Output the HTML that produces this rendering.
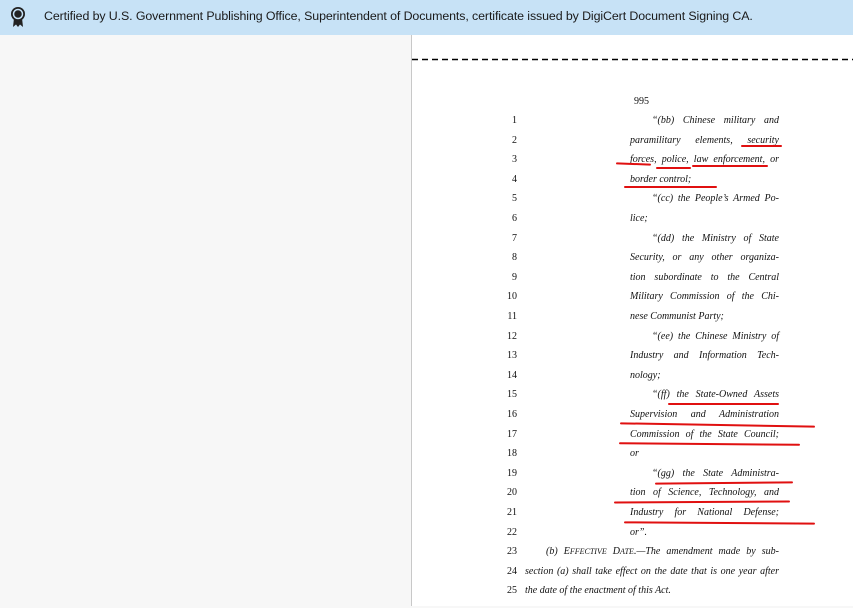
<!DOCTYPE html>
<html><head><meta charset="utf-8"><style>
body{margin:0;width:853px;height:606px;overflow:hidden;position:relative;background:#f7f7f7;font-family:"Liberation Sans",sans-serif}
#ban{position:absolute;left:0;top:0;width:853px;height:35px;background:#c7e2f6}
#ban span{position:absolute;left:44px;top:9px;font-size:12.4px;letter-spacing:-0.1px;color:#1a1a1a}
#pg{position:absolute;left:411px;top:35px;width:442px;height:571px;background:#fff;border-left:1px solid #c8c8c8}
.n{position:absolute;width:30px;text-align:right;font-family:"Liberation Serif",serif;font-size:10px;color:#111}
.t{position:absolute;font-family:"Liberation Serif",serif;font-style:italic;font-size:10px;color:#111;white-space:nowrap}
.j{text-align:justify;text-align-last:justify;white-space:normal}
.r{position:absolute;height:2px;background:#e01010;border-radius:1px}
#txt{position:absolute;left:0;top:2px;width:853px;height:606px}
</style></head><body>
<div id="ban"><svg style="position:absolute;left:10px;top:6px" width="16" height="22" viewBox="0 0 16 22"><path d="M4 12 L3 21 L6 18.5 L8 21 L10 18.5 L13 21 L12 12Z" fill="#222"/><circle cx="8" cy="8" r="7" fill="#222"/><circle cx="8" cy="8" r="4.5" fill="none" stroke="#c7e2f6" stroke-width="1.5"/></svg><span>Certified by U.S. Government Publishing Office, Superintendent of Documents, certificate issued by DigiCert Document Signing CA.</span></div>
<div id="pg"></div>
<svg style="position:absolute;left:412px;top:58px" width="441" height="3"><line x1="0" y1="1.5" x2="441" y2="1.5" stroke="#000" stroke-width="1.5" stroke-dasharray="6 4"/></svg>
<div id="txt">
<div class="t" style="left:634px;top:94px;font-style:normal">995</div>

<div class="n" style="left:487px;top:113px">1</div><div class="t j" style="left:652px;top:113px;width:127px">“(bb) Chinese military and</div>
<div class="n" style="left:487px;top:133px">2</div><div class="t j" style="left:630px;top:133px;width:149px">paramilitary elements, security</div>
<div class="n" style="left:487px;top:152px">3</div><div class="t j" style="left:630px;top:152px;width:149px">forces, police, law enforcement, or</div>
<div class="n" style="left:487px;top:172px">4</div><div class="t" style="left:630px;top:172px">border control;</div>
<div class="n" style="left:487px;top:191px">5</div><div class="t j" style="left:652px;top:191px;width:127px">“(cc) the People’s Armed Po-</div>
<div class="n" style="left:487px;top:211px">6</div><div class="t" style="left:630px;top:211px">lice;</div>
<div class="n" style="left:487px;top:231px">7</div><div class="t j" style="left:652px;top:231px;width:127px">“(dd) the Ministry of State</div>
<div class="n" style="left:487px;top:250px">8</div><div class="t j" style="left:630px;top:250px;width:149px">Security, or any other organiza-</div>
<div class="n" style="left:487px;top:270px">9</div><div class="t j" style="left:630px;top:270px;width:149px">tion subordinate to the Central</div>
<div class="n" style="left:487px;top:289px">10</div><div class="t j" style="left:630px;top:289px;width:149px">Military Commission of the Chi-</div>
<div class="n" style="left:487px;top:309px">11</div><div class="t" style="left:630px;top:309px">nese Communist Party;</div>
<div class="n" style="left:487px;top:329px">12</div><div class="t j" style="left:652px;top:329px;width:127px">“(ee) the Chinese Ministry of</div>
<div class="n" style="left:487px;top:348px">13</div><div class="t j" style="left:630px;top:348px;width:149px">Industry and Information Tech-</div>
<div class="n" style="left:487px;top:368px">14</div><div class="t" style="left:630px;top:368px">nology;</div>
<div class="n" style="left:487px;top:387px">15</div><div class="t j" style="left:652px;top:387px;width:127px">“(ff) the State-Owned Assets</div>
<div class="n" style="left:487px;top:407px">16</div><div class="t j" style="left:630px;top:407px;width:149px">Supervision and Administration</div>
<div class="n" style="left:487px;top:427px">17</div><div class="t j" style="left:630px;top:427px;width:149px">Commission of the State Council;</div>
<div class="n" style="left:487px;top:446px">18</div><div class="t" style="left:630px;top:446px">or</div>
<div class="n" style="left:487px;top:466px">19</div><div class="t j" style="left:652px;top:466px;width:127px">“(gg) the State Administra-</div>
<div class="n" style="left:487px;top:485px">20</div><div class="t j" style="left:630px;top:485px;width:149px">tion of Science, Technology, and</div>
<div class="n" style="left:487px;top:505px">21</div><div class="t j" style="left:630px;top:505px;width:149px">Industry for National Defense;</div>
<div class="n" style="left:487px;top:525px">22</div><div class="t" style="left:630px;top:525px">or”.</div>
<div class="n" style="left:487px;top:544px">23</div><div class="t j" style="left:546px;top:544px;width:233px">(b) E<span style="font-size:8px">FFECTIVE</span> D<span style="font-size:8px">ATE</span>.—The amendment made by sub-</div>
<div class="n" style="left:487px;top:564px">24</div><div class="t j" style="left:525px;top:564px;width:254px">section (a) shall take effect on the date that is one year after</div>
<div class="n" style="left:487px;top:583px">25</div><div class="t" style="left:525px;top:583px">the date of the enactment of this Act.</div>
</div>

<div class="r" style="left:741px;top:145px;width:41px"></div>
<div class="r" style="left:616px;top:163px;width:35px;transform:rotate(2deg)"></div>
<div class="r" style="left:656px;top:167px;width:35px"></div>
<div class="r" style="left:692px;top:165px;width:76px"></div>
<div class="r" style="left:624px;top:186px;width:93px"></div>
<div class="r" style="left:668px;top:403px;width:111px"></div>
<div class="r" style="left:620px;top:424px;width:195px;transform:rotate(1deg)"></div>
<div class="r" style="left:619px;top:443px;width:181px;transform:rotate(0.5deg)"></div>
<div class="r" style="left:655px;top:482px;width:138px;transform:rotate(-0.5deg)"></div>
<div class="r" style="left:614px;top:501px;width:176px;transform:rotate(-0.3deg)"></div>
<div class="r" style="left:624px;top:522px;width:191px;transform:rotate(0.4deg)"></div>
</body></html>
